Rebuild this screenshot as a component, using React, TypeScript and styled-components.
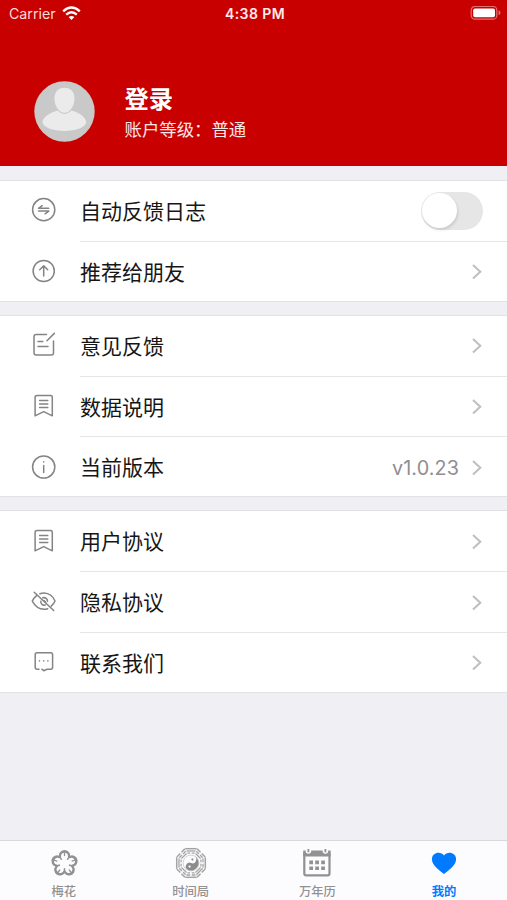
import React from "react";
import styled, { createGlobalStyle } from "styled-components";

const Global = createGlobalStyle`
  * { box-sizing: border-box; }
  body {
    margin: 0;
    background: #efeff4;
    font-family: Inter, "Noto Sans CJK SC", sans-serif;
    color: #161616;
  }
`;

const Screen = styled.div`
  width: 507px;
  height: 900px;
  display: flex;
  flex-direction: column;
  overflow: hidden;
  background: #efeff4;
`;

const Header = styled.header`
  height: 165.75px;
  flex: none;
  background: #c80000;
  color: #fff;
`;

const StatusBar = styled.div`
  height: 27px;
  display: grid;
  grid-template-columns: 1fr auto 1fr;
  align-items: center;
  padding: 0 6px 0 9px;
`;

const Carrier = styled.div`
  display: flex;
  align-items: center;
  gap: 6px;
  font-size: 14.2px;
  color: #fbdcdc;
`;

const Clock = styled.div`
  font-size: 14px;
  font-weight: 600;
  letter-spacing: 0.4px;
  color: #ffeaea;
`;

const Battery = styled.svg`
  justify-self: end;
  display: block;
`;

const Profile = styled.div`
  display: flex;
  align-items: center;
  height: 61px;
  margin-top: 54px;
  padding-left: 34px;
  gap: 29.5px;
`;

const Names = styled.div`
  display: flex;
  flex-direction: column;
  padding-top: 3px;
`;

const Name = styled.div`
  font-size: 24.3px;
  line-height: 33px;
  font-weight: 700;
`;

const Level = styled.div`
  font-size: 17.4px;
  line-height: 28px;
  color: #fde6e6;
`;

const Groups = styled.main`
  flex: 1;
  display: flex;
  flex-direction: column;
  gap: 13.25px;
  padding-top: 14.25px;
`;

const Group = styled.section`
  background: #fff;
  box-shadow: inset 0 1px #e2e2e6, inset 0 -1px #e2e2e6;
`;

const Row = styled.div`
  height: 60.8px;
  display: flex;
`;

const IconCell = styled.div`
  width: 80px;
  padding: 0 0 0 28px;
  display: flex;
  align-items: center;
`;

const RowBody = styled.div`
  flex: 1;
  display: flex;
  align-items: center;
  padding: 2px 24px 0 0;
  box-shadow: 0 1px #e6e6e9;

  ${Row}:last-child & { box-shadow: none; }
`;

const Label = styled.span`
  flex: 1;
  padding-top: 1px;
  font-size: 21px;
  line-height: 30px;
`;

const Value = styled.span`
  font-size: 19.8px;
  letter-spacing: 0.1px;
  color: #8e8e93;
  margin-right: 12px;
`;

const Toggle = styled.div`
  width: 62px;
  height: 38px;
  padding: 1px;
  border-radius: 19px;
  background: #e6e6e7;
`;

const Knob = styled.div`
  width: 35px;
  height: 35px;
  border-radius: 50%;
  background: #fff;
  box-shadow: 1px 2px 3px rgba(0, 0, 0, 0.12);
`;

const TabBar = styled.nav`
  flex: none;
  height: 60px;
  display: grid;
  grid-template-columns: repeat(4, 1fr);
  background: #fcfcfe;
  border-top: 1px solid #d8d8dc;
`;

const Tab = styled.div<{ $active?: boolean }>`
  display: flex;
  flex-direction: column;
  align-items: center;
  padding-top: 5px;
  padding-left: 1px;
  color: ${(p) => (p.$active ? "#007aff" : "#929292")};
  font-size: 12.3px;
  font-weight: ${(p) => (p.$active ? 700 : 500)};
  line-height: 18px;

  svg { display: block; margin-bottom: 3px; }
`;

const Icon = ({ children }: { children: React.ReactNode }) => (
  <svg width="32" height="32" viewBox="0 0 32 32" fill="none" stroke="#848484" strokeWidth="1.5" strokeLinecap="round" strokeLinejoin="round">
    {children}
  </svg>
);

const icons = {
  swap: (
    <>
      <circle cx="15.7" cy="15.7" r="11.1" />
      <path d="M20.8 14.3H10.5L14.2 11.6M10.5 17.1h10.3l-3.7 2.7" />
    </>
  ),
  up: (
    <>
      <circle cx="15.7" cy="16" r="10.6" />
      <path d="M15.7 21V11M11.7 14.8l4-4 4 4" />
    </>
  ),
  edit: (
    <path d="M18.5 5.5H8.2Q6 5.5 6 7.7v16Q6 26 8.2 26h15.1q2.2 0 2.2-2.3V12M26.3 4.4l-7.3 7.4M10 12.4h4.8M10 17.4h10" />
  ),
  bookmark: (
    <path d="M9.3 5.4h13.3q1.7 0 1.7 1.7v18.7l-8.6-4.2-8.6 4.2V7.1q0-1.7 2.2-1.7ZM11.6 10.5h8.2M11.6 14h8.2M11.6 17.5h8.2" />
  ),
  info: (
    <>
      <circle cx="15.7" cy="16" r="11.1" />
      <path d="M15.7 14.5v7M15.7 10.8v.2" />
    </>
  ),
  eye: (
    <>
      <path d="M11.9 7.7q2-.7 4.2-.7c5 0 9.2 3.7 10.9 8-.8 2-2.1 3.8-3.8 5.2M19.7 22.7q-1.8.6-3.6.6c-5.2 0-9.4-3.8-11.8-8.2 1-2.1 2.5-3.9 4.3-5.4" />
      <path d="M6.2 6.2 25.7 24.5M14.8 11.8c2.5-.7 4.8 1 4.7 3.4M17.2 19c-2.4.8-4.7-1.2-4.4-3.7M16 14.6l1.8 1.7" />
    </>
  ),
  chat: (
    <path d="M11 23.2H9.1q-1.9 0-1.9-2V8.8q0-2 1.9-2h13.6q1.9 0 1.9 2v12.4q0 2-1.9 2h-3.6L15.7 24.7l-1.8-1.5M11.5 14.8v.3M15.7 14.8v.3M19.9 14.8v.3" />
  ),
};

const Chevron = () => (
  <svg width="12" height="18" viewBox="0 0 12 18" fill="none" stroke="#c0c0c3" strokeWidth="2.1">
    <path d="M2 1.9 9.3 8.7 2 15.5" />
  </svg>
);

type Item = { icon: keyof typeof icons; label: string; value?: string; toggle?: boolean };

const groups: Item[][] = [
  [
    { icon: "swap", label: "自动反馈日志", toggle: true },
    { icon: "up", label: "推荐给朋友" },
  ],
  [
    { icon: "edit", label: "意见反馈" },
    { icon: "bookmark", label: "数据说明" },
    { icon: "info", label: "当前版本", value: "v1.0.23" },
  ],
  [
    { icon: "bookmark", label: "用户协议" },
    { icon: "eye", label: "隐私协议" },
    { icon: "chat", label: "联系我们" },
  ],
];

const petals = [0, 72, 144, 216, 288];

const Flower = () => (
  <svg width="34" height="34" viewBox="-17.5 -17.5 34 34">
    <g fill="#919191">
      {petals.map((a) => <circle key={a} cy="-7.8" r="5.7" transform={`rotate(${a})`} />)}
    </g>
    <g fill="#fcfcfe">
      <circle r="7.4" />
      {petals.map((a) => <circle key={a} cy="-7.2" r="3.5" transform={`rotate(${a})`} />)}
    </g>
    <g stroke="#919191" strokeLinecap="round">
      {petals.map((a) => (
        <g key={a} transform={`rotate(${a})`}>
          <path d="M0-8v-2.5" strokeWidth="1.3" />
          <path d="M0 5.4v2.2" strokeWidth="1.6" />
        </g>
      ))}
    </g>
  </svg>
);

const trigrams = [0, 45, 90, 135, 180, 225, 270, 315];

const Bagua = () => (
  <svg width="34" height="34" viewBox="-17 -17 34 34">
    <g stroke="#a3a3a3" fill="none">
      {trigrams.map((a, i) => (
        <g key={a} transform={`rotate(${a})`}>
          <path d="M-5.7-14.3H5.7" strokeWidth="1.5" strokeDasharray={i % 2 ? "4.9 1.6" : undefined} />
          <path d="M-4.5-12H4.5" strokeWidth="1.3" strokeDasharray={i % 3 ? "3.7 1.6" : undefined} />
          <path d="M-3.6-9.9H3.6" strokeWidth="1.2" strokeDasharray={i % 2 ? undefined : "2.8 1.6"} />
        </g>
      ))}
    </g>
    <circle r="7.9" fill="#fcfcfe" stroke="#b5b5b5" strokeWidth=".6" />
    <g transform="rotate(22)">
      <path d="M0-7.6A7.6 7.6 0 0 1 0 7.6A3.8 3.8 0 0 1 0 0A3.8 3.8 0 0 0 0-7.6Z" fill="#8c8c8c" />
      <circle cy="-3.8" r="1.1" fill="#919191" />
      <circle cy="3.8" r="1.1" fill="#fcfcfe" />
    </g>
  </svg>
);

const Calendar = () => (
  <svg width="34" height="34" viewBox="0 0 34 34">
    <rect x="4.3" y="6.2" width="25.2" height="23.2" rx="1.8" fill="none" stroke="#919191" strokeWidth="2.2" />
    <path d="M3.2 4.5h27.4v6H3.2Z" fill="#919191" />
    <g fill="#fcfcfe">
      <circle cx="8.4" cy="5" r="2.8" />
      <circle cx="25.4" cy="5" r="2.8" />
    </g>
    <path d="M8.4 3v3.3M25.4 3v3.3" stroke="#919191" strokeWidth="1.8" />
    <path d="M9.3 16.4h15.6M9.3 22.2h15.6" stroke="#919191" strokeWidth="3.6" strokeDasharray="3.7 2.25" />
  </svg>
);

const Heart = () => (
  <svg width="34" height="34" viewBox="0 0 34 34">
    <path d="M17 28C13 24.8 4.9 19.2 4.9 13.2c0-7.3 9-8.4 12.1-3.8 3.1-4.6 12.1-3.5 12.1 3.8C29.1 19.2 21 24.8 17 28Z" fill="#007aff" />
  </svg>
);

export default function App() {
  return (
    <Screen>
      <Global />
      <Header>
        <StatusBar>
          <Carrier>
            Carrier
            <svg width="19" height="15" viewBox="0 0 19 15" fill="none" stroke="#fff" strokeWidth="2.4">
              <path d="M1.2 5.3q8.3-7.4 16.6 0M4.2 8.6q5.3-4.5 10.6 0" />
              <path d="M6.6 11q2.9-2.2 5.8 0L9.5 14Z" fill="#fff" stroke="none" />
            </svg>
          </Carrier>
          <Clock>4:38 PM</Clock>
          <Battery width="31" height="15" viewBox="0.5 0.5 31 15">
            <rect x="1.7" y=".9" width="25.6" height="12.8" rx="3.8" fill="none" stroke="#e07070" strokeWidth="1.2" />
            <rect x="3.7" y="2.9" width="21.8" height="8.9" rx="1.8" fill="#fff" />
            <path d="M29 5q2 0 2 2.2T29 9.5Z" fill="#e06c6c" />
          </Battery>
        </StatusBar>
        <Profile>
          <svg width="61" height="61" viewBox="0 0 61 61">
            <circle cx="30.5" cy="30.5" r="30.2" fill="#c9c9c9" />
            <path d="M8.4 40.5C10.2 33.7 19 31 24.3 29.2h12.4c5.6 1.8 13.7 4.4 15.6 11.3C52.3 46.4 42 50 30.4 50S8.4 46.4 8.4 40.5Z" fill="#ebebeb" />
            <path d="M30.5 6.2c6.8 0 10.8 4.8 10.7 11.3-.1 6.9-4.5 14.8-10.7 14.8s-10.7-7.9-10.8-14.8C19.6 11 23.7 6.2 30.5 6.2Z" fill="#ebebeb" stroke="#c9c9c9" strokeWidth="1.2" />
          </svg>
          <Names>
            <Name>登录</Name>
            <Level>账户等级：普通</Level>
          </Names>
        </Profile>
      </Header>
      <Groups>
        {groups.map((items, i) => (
          <Group key={i}>
            {items.map((item) => (
              <Row key={item.label}>
                <IconCell><Icon>{icons[item.icon]}</Icon></IconCell>
                <RowBody>
                  <Label>{item.label}</Label>
                  {item.value && <Value>{item.value}</Value>}
                  {item.toggle ? <Toggle><Knob /></Toggle> : <Chevron />}
                </RowBody>
              </Row>
            ))}
          </Group>
        ))}
      </Groups>
      <TabBar>
        <Tab><Flower />梅花</Tab>
        <Tab><Bagua />时间局</Tab>
        <Tab><Calendar />万年历</Tab>
        <Tab $active><Heart />我的</Tab>
      </TabBar>
    </Screen>
  );
}
